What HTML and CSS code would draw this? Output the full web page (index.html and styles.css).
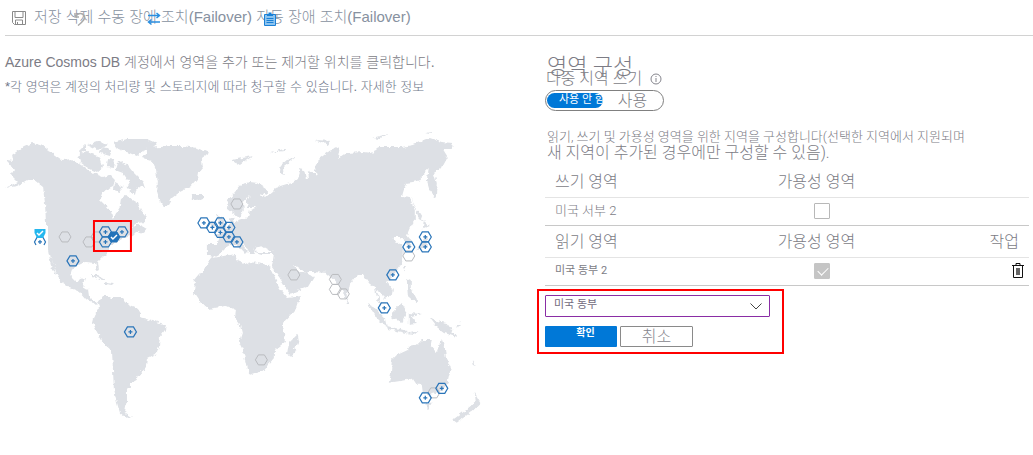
FILE: index.html
```html
<!DOCTYPE html>
<html lang="ko">
<head>
<meta charset="utf-8">
<title>Azure Cosmos DB</title>
<link rel="stylesheet" href="styles.css">
</head>
<body>
<header class="toolbar">
  <svg class="save-icon" viewBox="0 0 14 14"><path d="M.5.5h13v13h-11l-2-2zM3 .5v6h8v-6M3.500 13.500v-4.500h7v4.500M5.500 11v2.500"/></svg>
  <span>저장 삭제 수동 장애 조치(Failover) 자동 장애 조치(Failover)</span>
  <svg class="overlay-icon undo-icon" viewBox="0 0 12 14"><path d="M1 1v4h4M1.500 4.500C4 1 8 .5 10 3.500S9 9.500 4 13.500"/></svg>
  <svg class="overlay-icon swap-icon" viewBox="0 0 14 14"><path d="M1 3.500h11M9.500 1l3 2.500-3 2.500M13 10H1.500M4.500 7.500l-3 2.500 3 2.500"/></svg>
  <svg class="overlay-icon clip-icon" viewBox="0 0 12 14"><path class="clip-board" d="M.5 2.500h11v11H.5z"/><path class="clip-top" d="M3 4V2h1.500V.5h3V2H9v2z"/><path class="clip-lines" d="M2.500 6.500h7M2.500 8.500h7M2.500 10.500h7"/></svg>
</header>
<main class="content">
  <section class="locations">
    <p class="intro">Azure Cosmos DB 계정에서 영역을 추가 또는 제거할 위치를 클릭합니다.</p>
    <p class="note">*각 영역은 계정의 처리량 및 스토리지에 따라 청구할 수 있습니다. 자세한 정보</p>
    <svg class="map" viewBox="5 120 490 310" role="img" aria-label="지도">
      <defs>
        <filter id="coast" x="0" y="0" width="100%" height="100%"><feTurbulence type="fractalNoise" baseFrequency=".22" numOctaves="2" seed="4"/><feDisplacementMap in="SourceGraphic" scale="5" xChannelSelector="R" yChannelSelector="G"/></filter>
        <path id="hex" d="M-6 0L-3-5H3L6 0L3 5H-3z"/>
        <g id="plus"><use href="#hex"/><path d="M-2 0H2M0-2V2"/></g>
      </defs>
      <g class="land" filter="url(#coast)">
        <path d="M10 165L7 160L13 161L12 155L23 147L33 143L43 146L55 155L62 160L72 159L82 165L93 173L103 177L110 175L115 180L113 187L103 192L100 200L107 207L111 212L113 220L117 211L120 206L121 198L127 195L133 200L138 203L141 210L146 216L146 222L137 223L131 227L140 225L147 229L144 233L137 231L133 235L122 239L111 245L108 252L98 262L99 270L97 271L95 263L85 262L75 267L71 273L72 278L77 283L80 279L86 278L83 288L89 290L90 297L93 300L99 303L93 304L86 299L80 292L68 287L60 282L52 257L57 275L52 270L49 255L47 243L46 223L45 203L43 187L33 179L27 180L17 186L5 188L18 182L11 175L14 170z"/>
        <path d="M113 143L127 139L147 139L158 144L153 148L143 151L137 156L127 152L117 148zM117 163L125 162L133 172L143 182L145 188L137 187L135 195L127 188L130 183L123 173L115 170zM78 155L87 152L100 157L103 167L97 172L88 168L80 162zM88 145L100 141L107 145L98 150zM103 147L112 150L110 156L100 153zM108 159L115 160L114 168L107 167zM115 183L123 187L120 192L114 190zM83 147L86 144L86 150L80 155L78 152z"/>
        <path d="M147 148L160 147L170 146L183 146L197 148L209 153L202 158L203 167L198 173L197 179L190 187L180 192L172 198L167 207L165 207L160 202L157 192L158 182L156 170L152 161L143 158L147 153z"/>
        <path d="M191 195L195 194L202 194L204 198L197 201L192 199zM91 275L97 275L105 280L101 280zM105 282L114 283L112 285L105 284z"/>
        <path d="M98 303L103 296L110 296L112 298L122 298L128 304L138 308L142 314L140 317L152 320L160 323L166 325L165 330L160 337L159 347L157 353L147 358L146 367L140 375L136 377L137 380L130 384L130 388L127 390L127 397L127 402L125 407L124 412L132 417L126 418L120 413L117 403L114 390L113 370L112 350L103 342L97 332L93 323L95 315L99 308z"/>
        <path d="M233 213L227 208L228 200L235 192L242 184L250 182L258 183L267 189L267 195L260 193L265 198L272 192L277 187L287 184L292 183L298 178L300 173L298 169L304 170L306 178L309 178L308 170L317 175L315 167L320 158L328 152L340 147L338 159L347 153L363 152L372 153L380 147L402 147L413 145L422 141L430 138L442 142L453 143L452 149L443 149L448 157L442 168L434 173L437 183L436 198L430 190L427 180L429 168L427 170L422 175L422 180L413 182L406 183L402 197L410 198L415 210L415 220L410 228L407 235L411 240L411 247L408 247L405 240L400 237L393 237L397 243L402 242L404 252L403 260L401 265L390 280L387 282L393 290L392 295L385 299L382 293L377 290L379 298L382 307L378 302L375 287L371 285L363 275L358 275L350 285L347 300L340 287L335 280L327 273L313 272L305 272L294 264L298 272L307 272L314 277L308 287L290 294L287 290L280 278L272 267L274 254L262 254L255 252L253 247L255 254L251 254L247 247L241 243L248 251L245 254L238 246L230 245L225 248L220 253L213 257L207 255L207 244L218 244L219 238L215 235L223 232L230 227L230 220L233 217L235 222L248 218L250 210L258 207L248 207L247 202L250 195L243 203L244 210L240 218L237 215z"/>
        <path d="M217 214L222 217L227 230L216 232L220 225zM211 222L215 222L214 229L210 229zM295 158L283 167L284 175L280 173L281 165L288 159zM232 160L253 156L240 165zM270 153L287 148L285 151zM316 140L331 141L328 145zM372 138L388 134L380 139zM426 133L433 132L431 134z"/>
        <path d="M212 258L235 254L237 260L248 265L250 262L268 265L272 272L280 288L288 298L301 296L297 308L283 323L285 342L275 350L275 357L263 371L250 375L247 368L243 350L239 342L242 333L240 325L235 318L236 310L227 306L208 309L200 302L194 293L195 280L205 268zM298 334L299 341L292 357L287 355L289 343z"/>
        <path d="M392 360L397 355L408 350L412 345L416 346L422 340L432 340L431 346L437 353L442 338L445 347L446 357L451 368L448 382L442 392L430 395L423 393L422 385L417 385L413 379L402 381L389 383L391 375zM426 403L432 403L428 410zM475 393L481 403L473 411L457 423L453 420L471 407L476 402z"/>
        <path d="M402 303L406 310L403 322L393 319L392 313zM368 304L374 307L385 318L387 327L379 321zM387 326L408 331L406 333L388 329zM409 313L422 314L412 317L417 324L409 325zM407 279L411 281L411 288L417 299L417 304L408 296zM430 318L437 321L447 323L457 337L445 333L437 327zM424 221L430 226L423 229zM426 236L428 245L415 251L422 243zM411 196L417 210L424 221L419 218zM403 266L406 266L405 272zM346 299L349 303L347 305zM457 325L461 322L458 328zM472 361L476 366L473 365zM406 334L419 331L414 335z"/>
        <path class="sea" d="M256 248L262 246L265 248L273 252L262 252L257 252z"/>
      </g>
      <path class="sea" d="M34 226H48V249H34z"/>
      <g class="hex-off"><use href="#hex" x="65" y="237"/><use href="#hex" x="89" y="242"/><use href="#hex" x="97" y="237"/><use href="#hex" x="237" y="204"/><use href="#hex" x="294" y="275"/><use href="#hex" x="409" y="256"/><use href="#hex" x="434" y="393"/><use href="#hex" x="335.500" y="279.500"/><use href="#hex" x="335.500" y="289.500"/><use href="#hex" x="343.500" y="294"/><use href="#hex" x="261.500" y="360"/></g>
      <g class="hex-on"><use href="#plus" x="105.500" y="232"/><use href="#plus" x="122" y="232"/><use href="#plus" x="105.500" y="242"/><use href="#plus" x="73" y="261"/><use href="#plus" x="204" y="223"/><use href="#plus" x="212.500" y="227.500"/><use href="#plus" x="220.500" y="223"/><use href="#plus" x="229" y="227.500"/><use href="#plus" x="220.500" y="232.500"/><use href="#plus" x="229" y="237"/><use href="#plus" x="237" y="242"/><use href="#plus" x="425.500" y="237"/><use href="#plus" x="425.500" y="247"/><use href="#plus" x="409" y="247"/><use href="#plus" x="393" y="275"/><use href="#plus" x="384.500" y="308"/><use href="#plus" x="442" y="388.500"/><use href="#plus" x="425.500" y="398"/><use href="#plus" x="130.500" y="332"/><path d="M36 245L34.500 242L37 237.500H43L45.500 242L44 245M38 242H42M40 240V244"/></g>
      <use class="hex-write" href="#hex" x="114" y="237"/>
      <path class="hex-read" d="M34.500 229H45.500V233L43 238H37L34.500 233z"/>
      <path class="tick" d="M111 237l2 2 4-4M37 233l2 2 4-4"/>
      <path class="map-callout" d="M94 221H131V251H94z"/>
    </svg>
  </section>
  <section class="regions">
    <h1 class="title">영역 구성</h1>
    <div class="multi">다중 지역 쓰기 <svg class="info-icon" viewBox="0 0 12 12"><circle cx="6" cy="6" r="5"/><path d="M6 5v4M6 3v1"/></svg></div>
    <div class="toggle"><button class="toggle-on" type="button">사용 안 함</button><button class="toggle-off" type="button">사용</button></div>
    <p class="help"><span class="help-first">읽기, 쓰기 및 가용성 영역을 위한 지역을 구성합니다(선택한 지역에서 지원되며</span> <span class="help-rest">새 지역이 추가된 경우에만 구성할 수 있음).</span></p>
    <table class="grid">
      <thead><tr><th class="col-name">쓰기 영역</th><th class="col-zone">가용성 영역</th><th class="col-action"></th></tr></thead>
      <tbody>
        <tr class="row"><td>미국 서부 2</td><td class="check-cell"><input class="check" type="checkbox" aria-label="미국 서부 2 가용성 영역"></td><td></td></tr>
      </tbody>
    </table>
    <table class="grid">
      <thead><tr><th class="col-name">읽기 영역</th><th class="col-zone">가용성 영역</th><th class="col-action">작업</th></tr></thead>
      <tbody>
        <tr class="row row-small"><td>미국 동부 2</td><td class="check-cell"><input class="check" type="checkbox" checked disabled aria-label="미국 동부 2 가용성 영역"></td><td class="delete-cell"><button class="delete" type="button" aria-label="삭제"><svg viewBox="0 0 12 15"><path d="M0 2.500h12M4 2.500V.500h4v2M1.500 2.500v12h9v-12"/><path class="trash-fill" d="M4 5h4v7H4z"/></svg></button></td></tr>
      </tbody>
    </table>
    <form class="picker">
      <div class="select-wrap">
        <select class="select" aria-label="읽기 영역"><option>미국 동부</option></select>
        <svg class="chevron" viewBox="0 0 12 7"><path d="M.500.500L6 6L11.500.500"/></svg>
      </div>
      <div class="actions"><button class="ok" type="button">확인</button><button class="cancel" type="button">취소</button></div>
    </form>
  </section>
</main>
</body>
</html>
```

FILE: styles.css
```css
* { box-sizing: border-box; }
body {
  margin: 0;
  background: #fff;
  color: #7c7c85;
  font-family: Roboto, "Noto Sans CJK KR", sans-serif;
  font-weight: 300;
}
svg { fill: none; display: block; }
button, select, input { font: inherit; margin: 0; padding: 0; }
h1, p { margin: 0; font-weight: 300; }

.toolbar {
  position: relative;
  display: flex;
  align-items: center;
  gap: 8px;
  height: 36px;
  margin-left: 5px;
  padding-left: 7px;
  border-bottom: 1px solid #d2d2d2;
  color: #8791a0;
  font-size: 15px;
  white-space: nowrap;
}
.toolbar, .intro, .note { font-family: "Liberation Sans", "Noto Sans CJK KR", sans-serif; }
.toolbar span { line-height: 34px; height: 36px; }
.save-icon { width: 14px; height: 14px; stroke: #8a8a8a; }
.overlay-icon { position: absolute; top: 12px; height: 14px; }
.undo-icon { left: 69px; width: 12px; stroke: #aaa; stroke-width: 1.5; }
.swap-icon { left: 142px; width: 14px; stroke: #2b8fe0; stroke-width: 1.5; }
.clip-icon { left: 259px; width: 12px; }
.clip-board { fill: #8cc4f0; stroke: #1b80d6; }
.clip-top { fill: #1b80d6; }
.clip-lines { stroke: #1b80d6; }

.content {
  display: grid;
  grid-template-columns: 135fr 121fr;
  padding: 0 4px 0 5px;
}
.intro { margin-top: 16px; font-size: 14px; line-height: 20px; }
.note { margin-top: 5px; font-size: 13px; line-height: 20px; color: #6f788a; }
.map { width: 90.7%; margin-top: 23px; }
.land { fill: #dde0e5; }
.sea { fill: #fff; }
.hex-off { stroke: #b9bbbf; }
.hex-on { stroke: #2a75b9; stroke-width: 1.2; }
.hex-write { fill: #2272b9; stroke: #2272b9; }
.hex-read { fill: #25b7ee; }
.tick { stroke: #fff; stroke-width: 1.5; }
.map-callout { stroke: #f00; stroke-width: 2; }

.title { margin-top: 21px; padding-left: 2px; font-size: 22px; line-height: 20px; }
.multi {
  display: flex;
  align-items: center;
  gap: 8px;
  height: 14px;
  margin-top: -5px;
  padding-left: 1px;
  font-size: 16px;
  line-height: 14px;
}
.info-icon { width: 12px; height: 12px; stroke: #85858d; }
.toggle {
  display: flex;
  align-items: center;
  width: 119px;
  height: 21px;
  margin-top: 4px;
  padding: 0 1px;
  border: 1px solid #808080;
  border-radius: 11px;
}
.toggle-on, .toggle-off { border: 0; background: none; color: inherit; white-space: nowrap; overflow: hidden; }
.toggle-on {
  width: 56px;
  height: 15px;
  padding: 0 0 2px 12px;
  border-radius: 8px;
  background: #0078d7;
  color: #fff;
  font-size: 11px;
  font-weight: 400;
  line-height: 13px;
  text-align: left;
}
.toggle-off { flex: 1; font-size: 16px; line-height: 19px; }

.help { display: flex; flex-direction: column; margin-top: 18px; padding-left: 2px; }
.help-first { font-size: 13px; line-height: 16px; white-space: nowrap; }
.help-rest { font-size: 16px; line-height: 16px; }

.grid { width: 100%; border-collapse: collapse; table-layout: fixed; border-bottom: 1px solid #c8c8c8; }
.help + .grid { margin-top: 4px; }
.grid th {
  height: 32px;
  padding: 2px 10px 0;
  border-bottom: 1px solid #e4e4e4;
  font-size: 16px;
  font-weight: 300;
  line-height: 20px;
  text-align: left;
}
.grid td { height: 28px; padding: 0 10px; font-size: 13px; line-height: 16px; }
.grid .row-small td { padding-bottom: 2px; font-size: 11px; font-weight: 400; }
.col-name { width: 46%; }
.col-action { width: 16%; }
.grid .col-action { text-align: right; }
.grid .check-cell { padding-left: 46px; }
.grid .delete-cell { padding-right: 5px; }
.check {
  display: block;
  appearance: none;
  position: relative;
  width: 16px;
  height: 16px;
  border: 1px solid #b8b8b8;
  border-radius: 1px;
  background: #fff;
}
.check:checked { border-color: #c5c5c5; background: #c5c5c5; }
.check:checked::after {
  content: "";
  position: absolute;
  left: 5px;
  top: 1px;
  width: 5px;
  height: 9px;
  border: solid #fff;
  border-width: 0 1px 1px 0;
  rotate: 45deg;
}
.delete { display: block; width: 12px; height: 15px; margin-left: auto; border: 0; background: none; }
.delete svg { width: 12px; height: 15px; stroke: #111; }
.delete .trash-fill { fill: #666; stroke: none; }

.picker {
  width: 247px;
  margin: 3px 0 0 -8px;
  padding: 4px 12px 5px 6px;
  border: 2px solid #f00;
}
.select-wrap { position: relative; }
.select {
  display: block;
  appearance: none;
  width: 100%;
  height: 22px;
  padding: 0 8px 3px;
  border: 1px solid #8a2da5;
  border-radius: 1px;
  background: #fff;
  color: #736b80;
  font-size: 11px;
  font-weight: 400;
}
.chevron { position: absolute; right: 8px; top: 8px; width: 12px; height: 7px; stroke: #444; pointer-events: none; }
.actions { display: flex; gap: 3px; margin-top: 9px; }
.ok, .cancel { height: 21px; border-radius: 1px; }
.ok { width: 72px; padding: 0 0 7px 9px; border: 0; background: #0078d7; color: #fff; font-size: 10px; font-weight: 700; line-height: 14px; }
.cancel { width: 73px; border: 1px solid #8a8a8a; background: #fff; color: #85858d; font-size: 16px; line-height: 19px; }
```
